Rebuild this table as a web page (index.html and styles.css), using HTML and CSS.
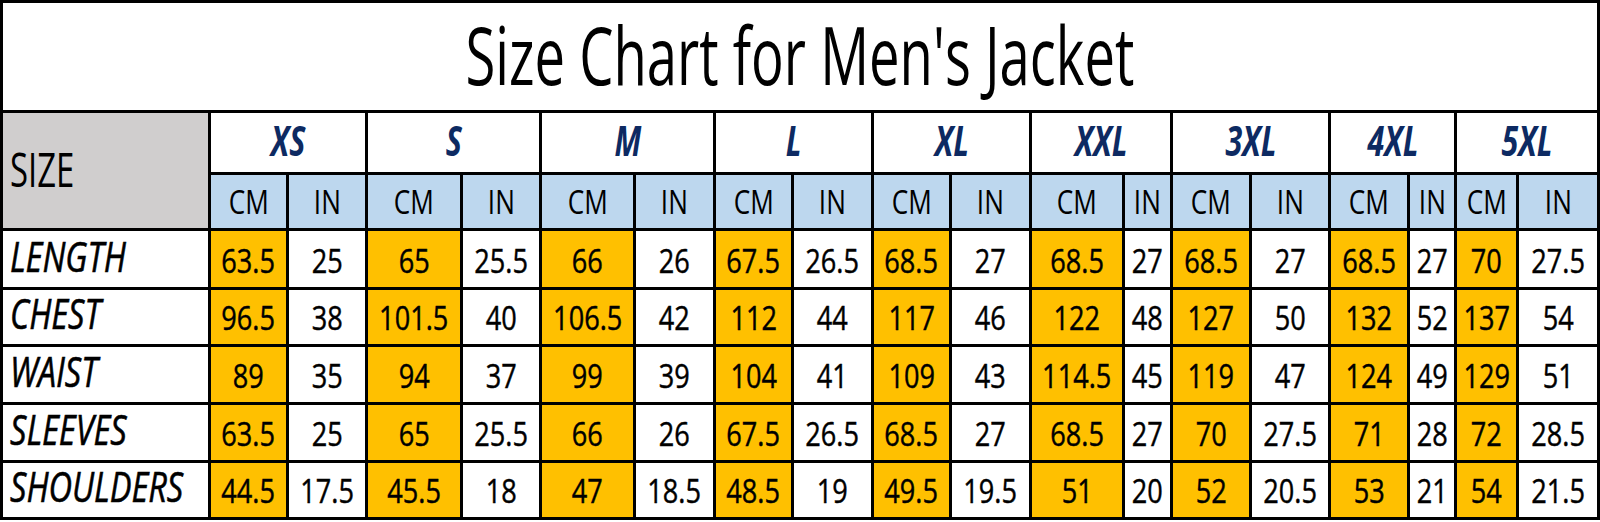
FILE: index.html
```html
<!DOCTYPE html>
<html lang="en">
<head>
<meta charset="utf-8">
<title>Size Chart for Men's Jacket</title>
<link rel="stylesheet" href="styles.css">
</head>
<body>
<div class="chart">
  <div class="cell title"><span>Size Chart for Men's Jacket</span></div>

  <div class="cell size-head"><span>SIZE</span></div>
  <div class="cell sz"><span>XS</span></div>
  <div class="cell sz"><span>S</span></div>
  <div class="cell sz"><span>M</span></div>
  <div class="cell sz"><span>L</span></div>
  <div class="cell sz"><span>XL</span></div>
  <div class="cell sz"><span>XXL</span></div>
  <div class="cell sz"><span>3XL</span></div>
  <div class="cell sz"><span>4XL</span></div>
  <div class="cell sz"><span>5XL</span></div>

  <div class="cell unit"><span>CM</span></div><div class="cell unit"><span>IN</span></div>
  <div class="cell unit"><span>CM</span></div><div class="cell unit"><span>IN</span></div>
  <div class="cell unit"><span>CM</span></div><div class="cell unit"><span>IN</span></div>
  <div class="cell unit"><span>CM</span></div><div class="cell unit"><span>IN</span></div>
  <div class="cell unit"><span>CM</span></div><div class="cell unit"><span>IN</span></div>
  <div class="cell unit"><span>CM</span></div><div class="cell unit"><span>IN</span></div>
  <div class="cell unit"><span>CM</span></div><div class="cell unit"><span>IN</span></div>
  <div class="cell unit"><span>CM</span></div><div class="cell unit"><span>IN</span></div>
  <div class="cell unit"><span>CM</span></div><div class="cell unit"><span>IN</span></div>

  <div class="cell label"><span>LENGTH</span></div>
  <div class="cell cm"><span>63.5</span></div><div class="cell in"><span>25</span></div>
  <div class="cell cm"><span>65</span></div><div class="cell in"><span>25.5</span></div>
  <div class="cell cm"><span>66</span></div><div class="cell in"><span>26</span></div>
  <div class="cell cm"><span>67.5</span></div><div class="cell in"><span>26.5</span></div>
  <div class="cell cm"><span>68.5</span></div><div class="cell in"><span>27</span></div>
  <div class="cell cm"><span>68.5</span></div><div class="cell in"><span>27</span></div>
  <div class="cell cm"><span>68.5</span></div><div class="cell in"><span>27</span></div>
  <div class="cell cm"><span>68.5</span></div><div class="cell in"><span>27</span></div>
  <div class="cell cm"><span>70</span></div><div class="cell in"><span>27.5</span></div>

  <div class="cell label"><span>CHEST</span></div>
  <div class="cell cm"><span>96.5</span></div><div class="cell in"><span>38</span></div>
  <div class="cell cm"><span>101.5</span></div><div class="cell in"><span>40</span></div>
  <div class="cell cm"><span>106.5</span></div><div class="cell in"><span>42</span></div>
  <div class="cell cm"><span>112</span></div><div class="cell in"><span>44</span></div>
  <div class="cell cm"><span>117</span></div><div class="cell in"><span>46</span></div>
  <div class="cell cm"><span>122</span></div><div class="cell in"><span>48</span></div>
  <div class="cell cm"><span>127</span></div><div class="cell in"><span>50</span></div>
  <div class="cell cm"><span>132</span></div><div class="cell in"><span>52</span></div>
  <div class="cell cm"><span>137</span></div><div class="cell in"><span>54</span></div>

  <div class="cell label"><span>WAIST</span></div>
  <div class="cell cm"><span>89</span></div><div class="cell in"><span>35</span></div>
  <div class="cell cm"><span>94</span></div><div class="cell in"><span>37</span></div>
  <div class="cell cm"><span>99</span></div><div class="cell in"><span>39</span></div>
  <div class="cell cm"><span>104</span></div><div class="cell in"><span>41</span></div>
  <div class="cell cm"><span>109</span></div><div class="cell in"><span>43</span></div>
  <div class="cell cm"><span>114.5</span></div><div class="cell in"><span>45</span></div>
  <div class="cell cm"><span>119</span></div><div class="cell in"><span>47</span></div>
  <div class="cell cm"><span>124</span></div><div class="cell in"><span>49</span></div>
  <div class="cell cm"><span>129</span></div><div class="cell in"><span>51</span></div>

  <div class="cell label"><span>SLEEVES</span></div>
  <div class="cell cm"><span>63.5</span></div><div class="cell in"><span>25</span></div>
  <div class="cell cm"><span>65</span></div><div class="cell in"><span>25.5</span></div>
  <div class="cell cm"><span>66</span></div><div class="cell in"><span>26</span></div>
  <div class="cell cm"><span>67.5</span></div><div class="cell in"><span>26.5</span></div>
  <div class="cell cm"><span>68.5</span></div><div class="cell in"><span>27</span></div>
  <div class="cell cm"><span>68.5</span></div><div class="cell in"><span>27</span></div>
  <div class="cell cm"><span>70</span></div><div class="cell in"><span>27.5</span></div>
  <div class="cell cm"><span>71</span></div><div class="cell in"><span>28</span></div>
  <div class="cell cm"><span>72</span></div><div class="cell in"><span>28.5</span></div>

  <div class="cell label"><span>SHOULDERS</span></div>
  <div class="cell cm"><span>44.5</span></div><div class="cell in"><span>17.5</span></div>
  <div class="cell cm"><span>45.5</span></div><div class="cell in"><span>18</span></div>
  <div class="cell cm"><span>47</span></div><div class="cell in"><span>18.5</span></div>
  <div class="cell cm"><span>48.5</span></div><div class="cell in"><span>19</span></div>
  <div class="cell cm"><span>49.5</span></div><div class="cell in"><span>19.5</span></div>
  <div class="cell cm"><span>51</span></div><div class="cell in"><span>20</span></div>
  <div class="cell cm"><span>52</span></div><div class="cell in"><span>20.5</span></div>
  <div class="cell cm"><span>53</span></div><div class="cell in"><span>21</span></div>
  <div class="cell cm"><span>54</span></div><div class="cell in"><span>21.5</span></div>
</div>
</body>
</html>
```

FILE: styles.css
```css
html, body {
  margin: 0;
  padding: 0;
  background: #ffffff;
}

.chart {
  display: grid;
  grid-template-columns: 205px 75px 76px 92px 76px 91px 77px 75px 77px 75px 77px 90px 45px 76px 76px 76px 44px 59px 78px;
  grid-template-rows: 107px 59px 53px 56px 54px 55px 55px 54px;
  gap: 3px;
  padding: 3px;
  width: max-content;
  background: #000000;
  font-family: "Open Sans", "Liberation Sans", sans-serif;
  color: #000000;
}

.cell {
  display: flex;
  align-items: flex-end;
  justify-content: center;
  background: #ffffff;
  white-space: nowrap;
  overflow: visible;
  line-height: 1;
}

.cell span {
  display: inline-block;
}

.title {
  grid-column: 1 / -1;
  font-size: 80px;
  padding-bottom: 16px;
}
.title span {
  transform: scaleX(0.68);
}

.size-head {
  grid-row: span 2;
  background: #d0cece;
  justify-content: flex-start;
  font-size: 47.6px;
  padding-left: 7px;
  padding-bottom: 35px;
}
.size-head span {
  transform: scaleX(0.69);
  transform-origin: left center;
}

.sz {
  grid-column: span 2;
  color: #0d2a62;
  font-weight: 700;
  font-style: italic;
  font-size: 40.6px;
  padding-bottom: 10.5px;
}
.sz span {
  transform: scaleX(0.75);
}

.unit {
  background: #bdd7ee;
  font-size: 33.6px;
  padding-bottom: 9px;
}
.unit span {
  transform: scaleX(0.78);
}

.label {
  justify-content: flex-start;
  font-style: italic;
  font-size: 42px;
  padding-left: 7px;
  padding-bottom: 9.8px;
  -webkit-text-stroke: 0.6px #000000;
}
.label span {
  transform: scaleX(0.775);
  transform-origin: left center;
}

.cm,
.in {
  font-size: 33.5px;
  padding-bottom: 9.2px;
  -webkit-text-stroke: 0.45px #000000;
}
.cm {
  background: #ffc000;
}
.cm span,
.in span {
  transform: scaleX(0.81);
}
```
